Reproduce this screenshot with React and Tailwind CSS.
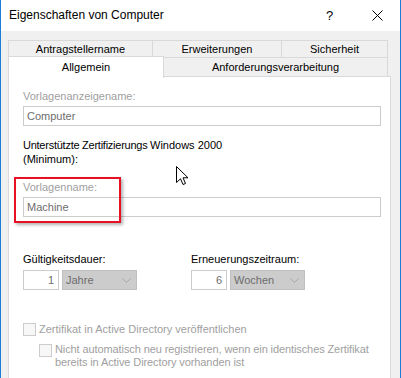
import React from 'react';

// Tab-Definitionen für die zwei Reiterzeilen
const topTabs = [
  { label: 'Antragstellername', w: 'w-[145px]' },
  { label: 'Erweiterungen', w: 'w-[129px]' },
  { label: 'Sicherheit', w: 'w-[106px]' },
];

const Chevron = () => (
  <svg width="9" height="5" viewBox="0 0 9 5" className="text-[#a6a6a6]">
    <path d="M0.5 0.5 L4.5 4.5 L8.5 0.5" fill="none" stroke="currentColor" strokeWidth="1" />
  </svg>
);

// Zahlenfeld + deaktivierte Auswahlliste
const PeriodField = ({ value, unit }) => (
  <div className="flex gap-[3px]">
    <div className="w-[36px] h-[20px] border border-[#cccccc] bg-white flex items-center justify-end pr-[4px] text-[#6d6d6d]">
      {value}
    </div>
    <div className="w-[75px] h-[20px] border border-[#bfbfbf] bg-[#cccccc] flex items-center justify-between pl-[3px] pr-[5px] text-[#6d6d6d]">
      <span>{unit}</span>
      <Chevron />
    </div>
  </div>
);

const Checkbox = () => (
  <div className="w-[13px] h-[13px] border border-[#cccccc] bg-[#f7f7f7] shrink-0" />
);

export default function App() {
  return (
    <div
      className="relative w-[401px] h-[378px] overflow-hidden bg-[#f0f0f0] border-x border-[#1a7dd7] text-[11px] leading-[13px] text-black"
      style={{ fontFamily: '"Liberation Sans", Arial, sans-serif' }}
    >
      {/* Titelleiste */}
      <div className="h-[31px] bg-white flex items-center pl-[8px] text-[12px]">
        <span className="flex-1">Eigenschaften von Computer</span>
        <span className="w-[10px] text-[13px] mr-[36px]">?</span>
        <svg width="11" height="11" viewBox="0 0 11 11" className="mr-[17px]">
          <path d="M0.5 0.5 L10.5 10.5 M10.5 0.5 L0.5 10.5" stroke="#000" strokeWidth="1" />
        </svg>
      </div>

      <div className="pt-[9px] pl-[7px]">
        {/* Reiter Zeile 1 */}
        <div className="flex h-[17px]">
          {topTabs.map((t, i) => (
            <div
              key={t.label}
              className={`${t.w} h-full flex items-center justify-center border-t border-r border-[#d9d9d9] ${i === 0 ? 'border-l' : ''}`}
            >
              {t.label}
            </div>
          ))}
        </div>
        {/* Reiter Zeile 2 */}
        <div className="flex h-[19px] border-t border-[#d9d9d9] w-[380px]">
          <div className="relative z-10 -mt-[2px] w-[156px] h-[22px] bg-white border-x border-t border-[#d9d9d9] flex items-start justify-center pt-[4px]">
            Allgemein
          </div>
          <div className="w-[224px] h-full flex items-center justify-center border-r border-[#d9d9d9]">
            Anforderungsverarbeitung
          </div>
        </div>

        {/* Inhaltsbereich */}
        <div className="w-[383px] h-[320px] bg-white border border-[#d9d9d9] pl-[14px] pt-[13px]">
          <div className="text-[#a0a0a0]">Vorlagenanzeigename:</div>
          <div className="mt-[3px] w-[358px] h-[20px] border border-[#cccccc] flex items-center pl-[3px] text-[#6d6d6d]">
            Computer
          </div>

          <div className="mt-[12px] flex leading-[14px]">
            <div className="w-[127px] shrink-0">
              <div className="whitespace-nowrap tracking-[-0.25px]">Unterstützte Zertifizierungs</div>
              <div>(Minimum):</div>
            </div>
            <div className="whitespace-nowrap">Windows 2000</div>
          </div>

          <div className="mt-[15px] text-[#a0a0a0]">Vorlagenname:</div>
          <div className="mt-[3px] w-[358px] h-[20px] border border-[#cccccc] flex items-center pl-[3px] text-[#6d6d6d]">
            Machine
          </div>

          <div className="mt-[36px] flex">
            <div className="w-[168px]">
              <div>Gültigkeitsdauer:</div>
              <div className="mt-[4px]">
                <PeriodField value="1" unit="Jahre" />
              </div>
            </div>
            <div>
              <div>Erneuerungszeitraum:</div>
              <div className="mt-[4px]">
                <PeriodField value="6" unit="Wochen" />
              </div>
            </div>
          </div>

          <div className="mt-[33px] flex items-center gap-[3px] text-[#a0a0a0]">
            <Checkbox />
            <span>Zertifikat in Active Directory veröffentlichen</span>
          </div>
          <div className="mt-[7px] ml-[16px] flex items-start gap-[3px] text-[#a0a0a0]">
            <div className="mt-[1px]">
              <Checkbox />
            </div>
            <span className="w-[330px] tracking-[-0.1px]">
              Nicht automatisch neu registrieren, wenn ein identisches Zertifikat bereits in Active Directory vorhanden ist
            </span>
          </div>
        </div>
      </div>

      {/* Rote Markierung */}
      <div className="absolute left-[13px] top-[177px] w-[107px] h-[46px] border-2 border-[#e81123] shadow-[2px_2px_3px_rgba(0,0,0,0.3)]" />

      {/* Mauszeiger */}
      <svg className="absolute left-[175px] top-[166px]" width="13" height="20" viewBox="0 0 13 20">
        <path d="M0.5 0.5 L0.5 16.5 L4.5 12.8 L7 18.5 L9.5 17.5 L7 11.8 L12 11.8 Z" fill="#fff" stroke="#000" strokeWidth="1" strokeLinejoin="miter" />
      </svg>
    </div>
  );
}
